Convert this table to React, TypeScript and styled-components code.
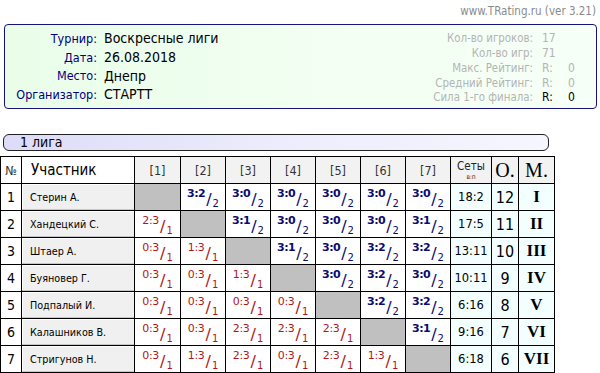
import React from "react";
import styled, { createGlobalStyle } from "styled-components";

const Global = createGlobalStyle`
  html, body { margin: 0; padding: 0; background: #fff; }
  body { font-family: "DejaVu Sans", Verdana, sans-serif; color: #000; }
`;

const Page = styled.div`
  width: 600px;
  height: 373px;
  overflow: hidden;
`;

const TopLine = styled.div`
  height: 24px;
  line-height: 22px;
  text-align: right;
  padding-right: 4px;
  font-size: 11.5px;
  font-stretch: condensed;
  color: #8a8a8a;
`;

const InfoBox = styled.div`
  margin-left: 4px;
  width: 593px;
  height: 85px;
  box-sizing: border-box;
  border: 1px solid #14147a;
  border-radius: 4px;
  background: linear-gradient(90deg, #e9fde9 0%, #f3fff3 60%, #f7fff7 100%);
  display: flex;
  justify-content: space-between;
`;

const LeftGrid = styled.div`
  display: grid;
  grid-template-columns: 92px auto;
  column-gap: 7px;
  grid-auto-rows: 18.7px;
  align-items: center;
  padding-top: 4px;
`;

const Label = styled.div`
  text-align: right;
  color: #000080;
  font-size: 12.5px;
  font-stretch: condensed;
`;

const Value = styled.div`
  font-size: 14px;
  font-stretch: condensed;
  color: #000;
`;

const RightGrid = styled.div`
  display: grid;
  grid-template-columns: auto 26px 12px;
  column-gap: 0;
  grid-auto-rows: 14.75px;
  align-items: center;
  padding-top: 6px;
  padding-right: 16px;
`;

const StatLabel = styled.div`
  text-align: right;
  color: #b4b4b4;
  font-size: 11.4px;
  font-stretch: condensed;
  padding-right: 9px;
`;

const StatValue = styled.div<{ $dark?: boolean; $span?: boolean }>`
  color: ${(p) => (p.$dark ? "#000" : "#b4b4b4")};
  font-size: 12px;
  font-stretch: condensed;
  ${(p) => (p.$span ? "grid-column: span 2;" : "")}
`;

const League = styled.div`
  margin-top: 25px;
  margin-left: 3px;
  width: 546px;
  height: 17px;
  box-sizing: border-box;
  border: 1px solid #222;
  border-radius: 6px;
  background: linear-gradient(90deg, #dcdcf8 0%, #ececfc 50%, #f6f6ff 100%);
  font-size: 14px;
  font-stretch: condensed;
  line-height: 15px;
  padding-left: 16px;
`;

const Table = styled.table`
  margin-top: 5px;
  border-collapse: collapse;
  table-layout: fixed;
  width: 554px;
`;

const Row = styled.tr`
  height: 27px;
`;

const Head = styled.th<{ $plain?: boolean; $align?: string }>`
  border: 1px solid #000;
  padding: 0;
  font-weight: normal;
  background: ${(p) => (p.$plain ? "#fff" : "#f2f2f2")};
  color: #333;
  font-size: 12.5px;
  font-stretch: condensed;
  text-align: ${(p) => p.$align || "center"};
  vertical-align: middle;
`;

const BigHead = styled(Head)`
  font-family: "Liberation Serif", "Times New Roman", serif;
  font-size: 20px;
  color: #000;
`;

const SetsHead = styled.div`
  display: flex;
  flex-direction: column;
  align-items: center;
  color: #222;
`;

const SetsTitle = styled.span`
  font-size: 11.5px;
  line-height: 13px;
`;

const SetsSub = styled.span`
  font-size: 6.5px;
  line-height: 8px;
`;

const ParticipantHead = styled.span`
  font-size: 15px;
  color: #000;
  padding-left: 9px;
`;

const Cell = styled.td<{ $bg?: string }>`
  border: 1px solid #000;
  padding: 0;
  background: ${(p) => p.$bg || "#fff"};
  text-align: center;
  vertical-align: middle;
`;

const NumCell = styled(Cell)`
  font-size: 14px;
  font-stretch: condensed;
`;

const NameCell = styled(Cell)`
  background: #f0f0f0;
  text-align: left;
  padding-left: 8px;
  font-size: 10.7px;
  font-stretch: condensed;
  box-shadow: inset 0 -1px 0 #c8c8c8, inset 1px 1px 0 #fff;
`;

const SetsCell = styled(Cell)`
  background: #f3ffff;
  font-size: 11.5px;
`;

const PointsCell = styled(Cell)`
  background: #f3ffff;
  font-size: 16px;
  font-stretch: condensed;
`;

const PlaceCell = styled(Cell)`
  background: #f3ffff;
  font-family: "Liberation Serif", "Times New Roman", serif;
  font-weight: bold;
  font-size: 17px;
`;

const Score = styled.div<{ $win: boolean }>`
  display: flex;
  justify-content: center;
  align-items: flex-start;
  height: 26px;
  color: ${(p) => (p.$win ? "#0b0b70" : "#b01818")};
`;

const Num = styled.span<{ $win: boolean }>`
  font-size: 11px;
  font-weight: ${(p) => (p.$win ? "bold" : "normal")};
  line-height: 1;
  margin-top: 4px;
  letter-spacing: ${(p) => (p.$win ? "-0.5px" : "-0.3px")};
`;

const Slash = styled.span`
  font-size: 16px;
  line-height: 1;
  margin-top: 8px;
  margin-left: 1px;
`;

const Den = styled.span`
  font-size: 10px;
  line-height: 1;
  margin-top: 15px;
  margin-left: 1px;
`;

type Res = string | null;

const players: { name: string; res: Res[]; sets: string; pts: number; place: string }[] = [
  { name: "Стерин А.", res: [null, "3:2", "3:0", "3:0", "3:0", "3:0", "3:0"], sets: "18:2", pts: 12, place: "I" },
  { name: "Хандецкий С.", res: ["2:3", null, "3:1", "3:0", "3:0", "3:0", "3:1"], sets: "17:5", pts: 11, place: "II" },
  { name: "Штаер А.", res: ["0:3", "1:3", null, "3:1", "3:0", "3:2", "3:2"], sets: "13:11", pts: 10, place: "III" },
  { name: "Буяновер Г.", res: ["0:3", "0:3", "1:3", null, "3:0", "3:2", "3:0"], sets: "10:11", pts: 9, place: "IV" },
  { name: "Подпалый И.", res: ["0:3", "0:3", "0:3", "0:3", null, "3:2", "3:2"], sets: "6:16", pts: 8, place: "V" },
  { name: "Калашников В.", res: ["0:3", "0:3", "2:3", "2:3", "2:3", null, "3:1"], sets: "9:16", pts: 7, place: "VI" },
  { name: "Стригунов Н.", res: ["0:3", "1:3", "2:3", "0:3", "2:3", "1:3", null], sets: "6:18", pts: 6, place: "VII" },
];

const widths = [21, 113, 46, 45, 45, 45, 45, 45, 45, 41, 27, 36];

const ScoreView = ({ r }: { r: string }) => {
  const [a, b] = r.split(":").map(Number);
  const win = a > b;
  return (
    <Score $win={win}>
      <Num $win={win}>{r}</Num>
      <Slash>/</Slash>
      <Den>{win ? 2 : 1}</Den>
    </Score>
  );
};

export default function App() {
  return (
    <Page>
      <Global />
      <TopLine>www.TRating.ru (ver 3.21)</TopLine>
      <InfoBox>
        <LeftGrid>
          <Label>Турнир:</Label>
          <Value>Воскресные лиги</Value>
          <Label>Дата:</Label>
          <Value>26.08.2018</Value>
          <Label>Место:</Label>
          <Value>Днепр</Value>
          <Label>Организатор:</Label>
          <Value>СТАРТТ</Value>
        </LeftGrid>
        <RightGrid>
          <StatLabel>Кол-во игроков:</StatLabel>
          <StatValue $span>17</StatValue>
          <StatLabel>Кол-во игр:</StatLabel>
          <StatValue $span>71</StatValue>
          <StatLabel>Макс. Рейтинг:</StatLabel>
          <StatValue>R:</StatValue>
          <StatValue>0</StatValue>
          <StatLabel>Средний Рейтинг:</StatLabel>
          <StatValue>R:</StatValue>
          <StatValue>0</StatValue>
          <StatLabel>Сила 1-го финала:</StatLabel>
          <StatValue $dark>R:</StatValue>
          <StatValue $dark>0</StatValue>
        </RightGrid>
      </InfoBox>
      <League>1 лига</League>
      <Table>
        <colgroup>
          {widths.map((w, i) => (
            <col key={i} style={{ width: w }} />
          ))}
        </colgroup>
        <thead>
          <Row>
            <Head $plain>№</Head>
            <Head $plain $align="left">
              <ParticipantHead>Участник</ParticipantHead>
            </Head>
            {[1, 2, 3, 4, 5, 6, 7].map((n) => (
              <Head key={n}>[{n}]</Head>
            ))}
            <Head>
              <SetsHead>
                <SetsTitle>Сеты</SetsTitle>
                <SetsSub>в:п</SetsSub>
              </SetsHead>
            </Head>
            <BigHead>O.</BigHead>
            <BigHead>M.</BigHead>
          </Row>
        </thead>
        <tbody>
          {players.map((p, i) => (
            <Row key={i}>
              <NumCell>{i + 1}</NumCell>
              <NameCell>{p.name}</NameCell>
              {p.res.map((r, j) =>
                r ? (
                  <Cell key={j}>
                    <ScoreView r={r} />
                  </Cell>
                ) : (
                  <Cell key={j} $bg="#c0c0c0" />
                )
              )}
              <SetsCell>{p.sets}</SetsCell>
              <PointsCell>{p.pts}</PointsCell>
              <PlaceCell>{p.place}</PlaceCell>
            </Row>
          ))}
        </tbody>
      </Table>
    </Page>
  );
}
